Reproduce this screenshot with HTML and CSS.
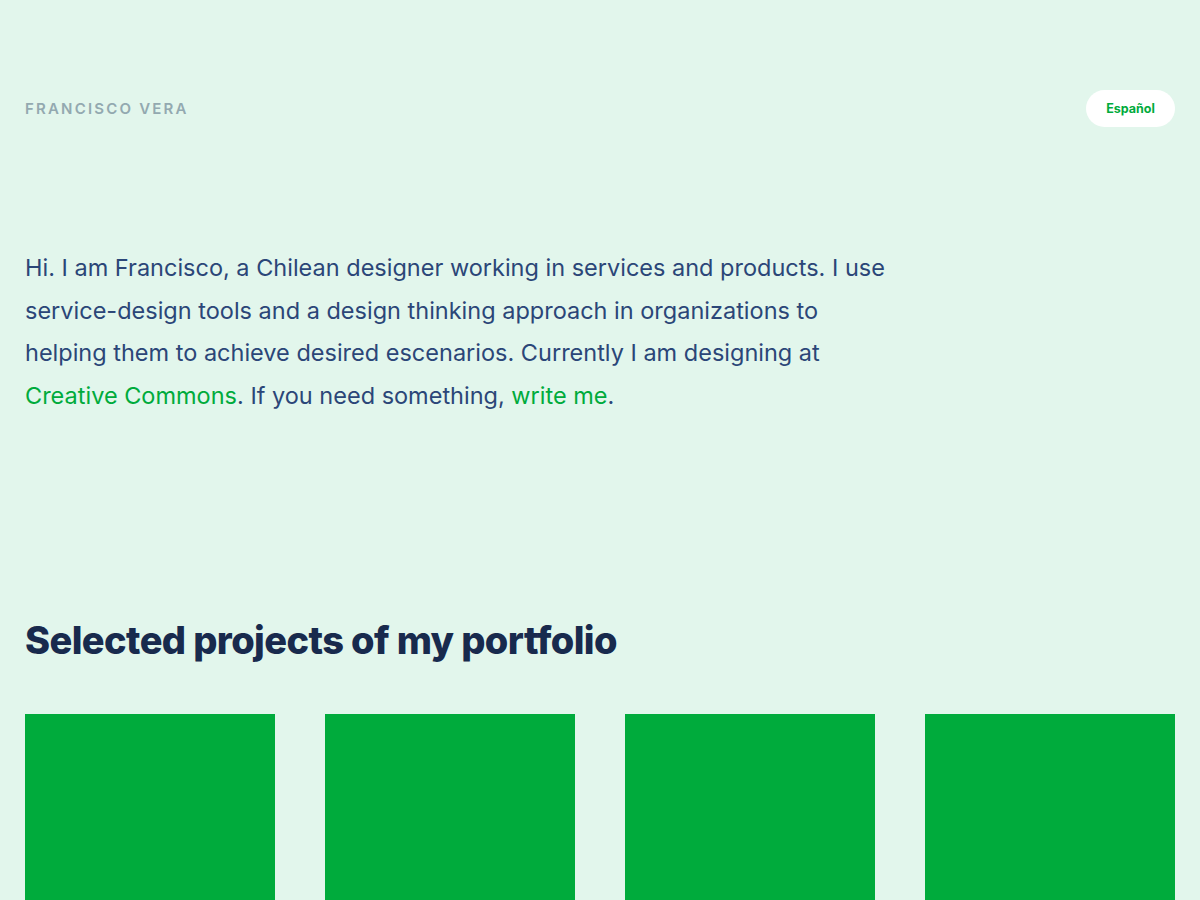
FILE: index.html
```html
<!DOCTYPE html>
<html lang="en">
<head>
<meta charset="utf-8">
<title>Francisco Vera</title>
<link rel="stylesheet" href="styles.css">
</head>
<body>
<div class="page">
  <header class="top">
    <div class="name">FRANCISCO VERA</div>
    <a class="lang" href="#">Español</a>
  </header>
  <section class="intro">
    <p>Hi. I am Francisco, a Chilean designer working in services and products. I use service-design tools and a design thinking approach in organizations to helping them to achieve desired escenarios. Currently I am designing at <a href="#">Creative Commons</a>. If you need something, <a href="#">write me</a>.</p>
  </section>
  <section class="projects">
    <h2>Selected projects of my portfolio</h2>
    <div class="grid">
      <div class="card"></div>
      <div class="card"></div>
      <div class="card"></div>
      <div class="card"></div>
    </div>
  </section>
</div>
</body>
</html>
```
FILE: styles.css
```css
html, body {
  margin: 0;
  padding: 0;
  background: #e2f6ec;
}
body {
  font-family: Inter, "Noto Sans", sans-serif;
}
.page {
  padding: 0 25px;
}
.top {
  display: flex;
  justify-content: space-between;
  align-items: center;
  padding-top: 90px;
  height: 37px;
}
.name {
  font-size: 15px;
  font-weight: 600;
  letter-spacing: 2.2px;
  color: #93a9b0;
  margin-top: -1px;
}
.lang {
  display: flex;
  align-items: center;
  justify-content: center;
  width: 89px;
  height: 37px;
  border-radius: 19px;
  background: #ffffff;
  color: #00ab3c;
  font-size: 12.5px;
  font-weight: 700;
  text-decoration: none;
  padding-bottom: 1px;
  box-sizing: border-box;
}
.intro {
  padding-top: 120px;
}
.intro p {
  margin: 0;
  max-width: 875px;
  font-size: 23.5px;
  line-height: 42.7px;
  color: #2b4678;
}
.intro a {
  color: #00ab3c;
  text-decoration: none;
}
.projects {
  padding-top: 199px;
}
.projects h2 {
  margin: 0;
  font-size: 38px;
  font-weight: 800;
  letter-spacing: -0.6px;
  color: #182a4d;
  line-height: 46px;
}
.grid {
  display: grid;
  grid-template-columns: repeat(4, 250px);
  column-gap: 50px;
  margin-top: 51px;
}
.card {
  height: 250px;
  background: #00ab3c;
}
```
